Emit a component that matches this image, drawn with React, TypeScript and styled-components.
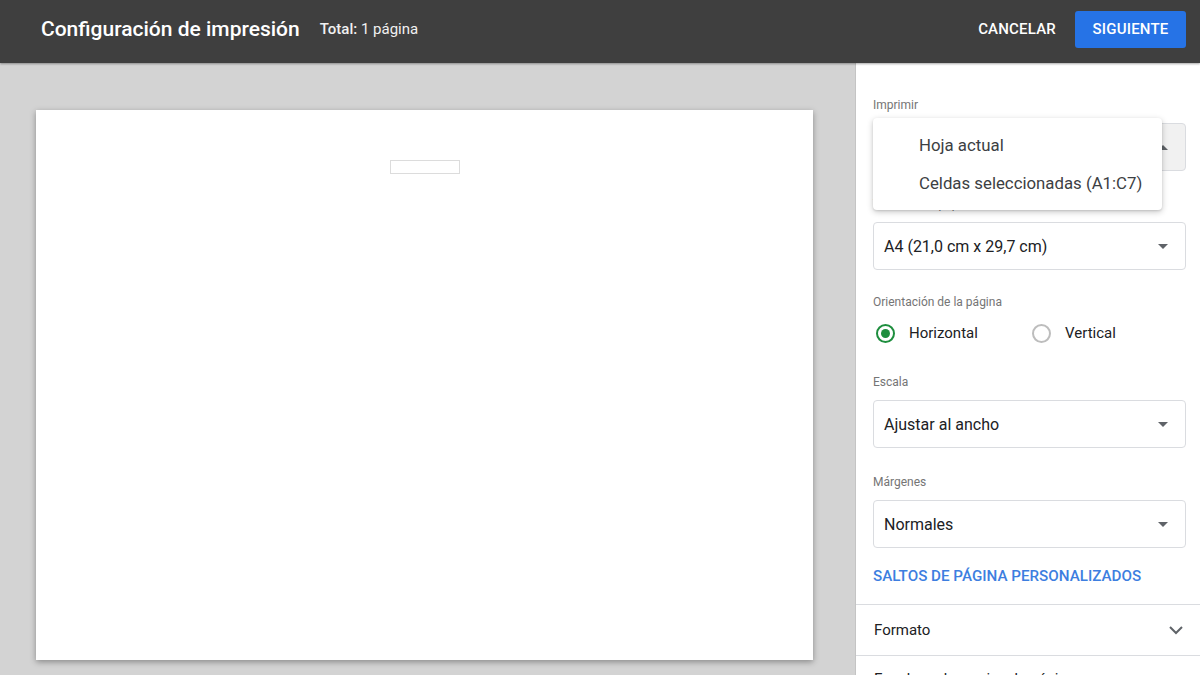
import styled, { createGlobalStyle } from 'styled-components';

const GlobalStyle = createGlobalStyle`
  html, body {
    margin: 0;
    padding: 0;
    background: #d3d3d3;
    font-family: Roboto, 'Liberation Sans', Arial, sans-serif;
    overflow: hidden;
  }
  * {
    box-sizing: border-box;
  }
`;

const printOptions = ['Hoja actual', 'Celdas seleccionadas (A1:C7)'];

function Arrow({ up }: { up?: boolean }) {
  return (
    <svg width='10' height='5' viewBox='0 0 10 5'>
      <path d={up ? 'M0 5 L5 0 L10 5 Z' : 'M0 0 L5 5 L10 0 Z'} fill='#5f6368' />
    </svg>
  );
}

function Chevron() {
  return (
    <svg width='16' height='10' viewBox='0 0 16 10'>
      <path
        d='M2 2 L8 8 L14 2'
        fill='none'
        stroke='#5f6368'
        strokeWidth='2'
      />
    </svg>
  );
}

function App() {
  return (
    <>
      <GlobalStyle />
      <Screen>
        <Header>
          <Title>Configuración de impresión</Title>
          <Total>
            <b>Total:</b> 1 página
          </Total>
          <Actions>
            <TextButton>CANCELAR</TextButton>
            <PrimaryButton>SIGUIENTE</PrimaryButton>
          </Actions>
        </Header>

        <Main>
          <Preview>
            <Page>
              <Cell />
            </Page>
          </Preview>

          <Panel>
            <Settings>
              <Field>
                <Label>Imprimir</Label>
                <SelectWrap>
                  <Select $active>
                    <span>Hoja actual</span>
                    <Arrow up />
                  </Select>
                  <Menu>
                    {printOptions.map((opt) => (
                      <MenuItem key={opt}>{opt}</MenuItem>
                    ))}
                  </Menu>
                </SelectWrap>
              </Field>

              <Field $mt={25}>
                <Label>Tamaño del papel</Label>
                <Select>
                  <span>A4 (21,0 cm x 29,7 cm)</span>
                  <Arrow />
                </Select>
              </Field>

              <Field $mt={24}>
                <Label>Orientación de la página</Label>
                <RadioRow>
                  <RadioOption>
                    <Radio $checked />
                    <span>Horizontal</span>
                  </RadioOption>
                  <RadioOption>
                    <Radio />
                    <span>Vertical</span>
                  </RadioOption>
                </RadioRow>
              </Field>

              <Field $mt={28}>
                <Label>Escala</Label>
                <Select>
                  <span>Ajustar al ancho</span>
                  <Arrow />
                </Select>
              </Field>

              <Field $mt={26}>
                <Label>Márgenes</Label>
                <Select>
                  <span>Normales</span>
                  <Arrow />
                </Select>
              </Field>

              <LinkButton>SALTOS DE PÁGINA PERSONALIZADOS</LinkButton>
            </Settings>

            <Section>
              <span>Formato</span>
              <Chevron />
            </Section>
            <Section $lift>
              <span>Encabezados y pies de página</span>
              <Chevron />
            </Section>
          </Panel>
        </Main>
      </Screen>
    </>
  );
}
export default App;

const Screen = styled.div`
  width: 1200px;
  height: 675px;
  display: flex;
  flex-direction: column;
  overflow: hidden;
`;

const Header = styled.header`
  height: 63px;
  flex-shrink: 0;
  background: #3f3f3f;
  display: flex;
  align-items: center;
  padding: 0 14px 0 41px;
  color: #fff;
  box-shadow: 0 1px 2px rgba(0, 0, 0, 0.35);
  position: relative;
  z-index: 1;
`;

const Title = styled.h1`
  margin: 0;
  font-size: 21px;
  font-weight: 500;
  line-height: 1;
  margin-top: -5px;
`;

const Total = styled.div`
  margin-left: 20px;
  margin-top: -5px;
  font-size: 15px;
  color: #f1f1f1;
  b {
    font-weight: 500;
  }
`;

const Actions = styled.div`
  margin-left: auto;
  display: flex;
  align-items: center;
  gap: 19px;
  margin-top: -5px;
`;

const TextButton = styled.button`
  border: none;
  background: none;
  color: #fff;
  font-family: inherit;
  font-size: 15px;
  font-weight: 500;
  letter-spacing: 0.2px;
  padding: 0;
`;

const PrimaryButton = styled.button`
  border: none;
  border-radius: 3px;
  background: #2673e6;
  color: #fff;
  font-family: inherit;
  font-size: 15px;
  font-weight: 500;
  letter-spacing: 0.2px;
  height: 37px;
  width: 111px;
`;

const Main = styled.div`
  flex: 1;
  display: flex;
  min-height: 0;
`;

const Preview = styled.div`
  flex: 1;
  background: #d3d3d3;
  padding: 47px 0 0 36px;
`;

const Page = styled.div`
  width: 777px;
  height: 550px;
  background: #fff;
  box-shadow: 0 2px 6px rgba(0, 0, 0, 0.35);
  display: flex;
  flex-direction: column;
  align-items: center;
  padding-top: 50px;
`;

const Cell = styled.div`
  width: 70px;
  height: 14px;
  border: 1px solid #dcdcdc;
`;

const Panel = styled.aside`
  width: 345px;
  flex-shrink: 0;
  background: #fff;
  border-left: 1px solid #c4c4c4;
  display: flex;
  flex-direction: column;
`;

const Settings = styled.div`
  padding: 34px 14px 0 17px;
  display: flex;
  flex-direction: column;
`;

const Field = styled.div<{ $mt?: number }>`
  display: flex;
  flex-direction: column;
  margin-top: ${(props) => props.$mt ?? 0}px;
`;

const Label = styled.label`
  font-size: 12px;
  line-height: 16px;
  color: #757575;
  margin-bottom: 10px;
`;

const SelectWrap = styled.div`
  position: relative;
`;

const Select = styled.div<{ $active?: boolean }>`
  height: 48px;
  border: 1px solid #dadce0;
  border-radius: 4px;
  background: ${(props) => (props.$active ? '#f1f1f1' : '#fff')};
  display: flex;
  align-items: center;
  justify-content: space-between;
  padding: 0 17px 0 10px;
  font-size: 16px;
  color: #202124;
`;

const Menu = styled.ul`
  position: absolute;
  top: -5px;
  left: 0;
  width: 289px;
  margin: 0;
  padding: 8px 0;
  list-style: none;
  background: #fff;
  border-radius: 4px;
  box-shadow: 0 2px 6px rgba(0, 0, 0, 0.22), 0 1px 2px rgba(0, 0, 0, 0.1);
  z-index: 2;
`;

const MenuItem = styled.li`
  height: 38px;
  display: flex;
  align-items: center;
  padding-left: 46px;
  font-size: 16.8px;
  color: #3c4043;
`;

const RadioRow = styled.div`
  display: flex;
  height: 26px;
  align-items: center;
`;

const RadioOption = styled.div`
  width: 156px;
  display: flex;
  align-items: center;
  gap: 14px;
  padding-left: 3px;
  font-size: 15px;
  color: #202124;
`;

const Radio = styled.span<{ $checked?: boolean }>`
  width: 19px;
  height: 19px;
  border-radius: 50%;
  border: 2px solid ${(props) => (props.$checked ? '#1e8e3e' : '#bdbdbd')};
  display: flex;
  align-items: center;
  justify-content: center;
  &::after {
    content: '';
    width: 9px;
    height: 9px;
    border-radius: 50%;
    background: ${(props) => (props.$checked ? '#1e8e3e' : 'transparent')};
  }
`;

const LinkButton = styled.div`
  margin-top: 18px;
  line-height: 20px;
  font-size: 15.2px;
  font-weight: 500;
  color: #3d7ee0;
  padding-bottom: 18px;
`;

const Section = styled.div<{ $lift?: boolean }>`
  height: 51px;
  flex-shrink: 0;
  border-top: 1px solid #dadce0;
  display: flex;
  align-items: center;
  justify-content: space-between;
  padding: 0 16px ${(props) => (props.$lift ? '4px' : '0')} 18px;
  font-size: 15px;
  color: #202124;
`;
